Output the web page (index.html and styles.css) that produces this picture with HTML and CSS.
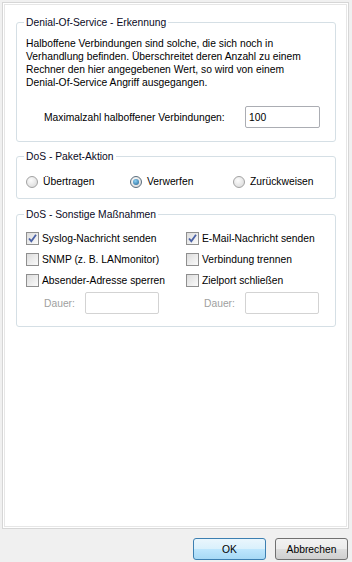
FILE: index.html
```html
<!DOCTYPE html>
<html lang="de">
<head>
    <meta charset="UTF-8">
    <title>DoS</title>
    <link rel="stylesheet" href="styles.css">
</head>
<body>
    <div class="panel">
        <fieldset class="group group-detect">
            <legend>Denial-Of-Service - Erkennung</legend>
            <p class="info">Halboffene Verbindungen sind solche, die sich noch in<br>Verhandlung befinden. Überschreitet deren Anzahl zu einem<br>Rechner den hier angegebenen Wert, so wird von einem<br>Denial-Of-Service Angriff ausgegangen.</p>
            <div class="max-row">
                <label for="maxhalf">Maximalzahl halboffener Verbindungen:</label>
                <input type="text" id="maxhalf" class="field" value="100">
            </div>
        </fieldset>

        <fieldset class="group group-action">
            <legend>DoS - Paket-Aktion</legend>
            <div class="radio-row">
                <span class="opt"><span class="radio"></span>Übertragen</span>
                <span class="opt"><span class="radio on"></span>Verwerfen</span>
                <span class="opt"><span class="radio"></span>Zurückweisen</span>
            </div>
        </fieldset>

        <fieldset class="group group-other">
            <legend>DoS - Sonstige Maßnahmen</legend>
            <div class="checks">
                <span class="opt"><span class="check"><svg viewBox="0 0 13 13" width="13" height="13"><path d="M3 6.5 L5.3 9.2 L10 2.8" fill="none" stroke="#4b62a6" stroke-width="1.8"/></svg></span>Syslog-Nachricht senden</span>
                <span class="opt"><span class="check"><svg viewBox="0 0 13 13" width="13" height="13"><path d="M3 6.5 L5.3 9.2 L10 2.8" fill="none" stroke="#4b62a6" stroke-width="1.8"/></svg></span>E-Mail-Nachricht senden</span>
                <span class="opt"><span class="check"></span>SNMP (z. B. LANmonitor)</span>
                <span class="opt"><span class="check"></span>Verbindung trennen</span>
                <span class="opt"><span class="check"></span>Absender-Adresse sperren</span>
                <span class="opt"><span class="check"></span>Zielport schließen</span>
                <span class="duration"><span class="dim">Dauer:</span><span class="field off"></span></span>
                <span class="duration"><span class="dim">Dauer:</span><span class="field off"></span></span>
            </div>
        </fieldset>
    </div>
    <div class="buttons">
        <button class="btn btn-default">OK</button>
        <button class="btn">Abbrechen</button>
    </div>
</body>
</html>
```

FILE: styles.css
```css
body {
    margin: 0;
    background: #f0f0f0;
    font-family: 'Liberation Sans', Arial, sans-serif;
    font-size: 10.3px;
    color: #000;
}
.panel {
    margin: 2px 3px 0 2px;
    height: 527px;
    box-sizing: border-box;
    background: #fff;
    border: 1px solid #d6d6d6;
    box-shadow: inset 0 0 0 1px #fff, inset 0 0 0 2px #e6e6e6;
    padding-top: 12px;
}
.group {
    width: 320px;
    box-sizing: border-box;
    margin: 0 0 0 13px;
    padding: 7px 9px 13px 9px;
    border: 1px solid #d5dfe5;
    border-radius: 3px;
}
.group legend {
    padding: 0 2px;
    margin-left: -2px;
    line-height: 15px;
    color: #0a0a1e;
}
.info {
    margin: 0;
    line-height: 13px;
    white-space: nowrap;
}
.max-row {
    display: flex;
    align-items: center;
    margin-top: 17px;
    padding-left: 18px;
}
.field {
    display: block;
    width: 75px;
    height: 22px;
    box-sizing: border-box;
    border: 1px solid #abadb3;
    border-radius: 2px;
    padding: 0 3px;
    font: inherit;
    color: #000;
    outline: none;
}
.max-row .field {
    margin-left: auto;
    margin-right: 6px;
}
.group-action {
    margin-top: 7px;
    padding-top: 10px;
    padding-bottom: 9px;
}
.radio-row {
    display: grid;
    grid-template-columns: 104px 103px 1fr;
    height: 15px;
}
.opt {
    display: flex;
    align-items: center;
    height: 21px;
    white-space: nowrap;
}
.radio-row .opt {
    height: 15px;
}
.radio {
    width: 12px;
    height: 12px;
    border-radius: 50%;
    border: 1px solid #a2a2a2;
    background: radial-gradient(circle at 40% 35%, #fcfcfc, #d6d6d6);
    box-sizing: border-box;
    margin-right: 5px;
    position: relative;
}
.radio.on {
    border-color: #5b6d7c;
}
.radio.on::after {
    content: "";
    position: absolute;
    left: 2px;
    top: 2px;
    width: 6px;
    height: 6px;
    border-radius: 50%;
    background: radial-gradient(circle at 40% 35%, #8ad0f4, #1f5f8f);
}
.group-other {
    margin-top: 8px;
    padding-top: 6px;
    padding-bottom: 12px;
}
.checks {
    display: grid;
    grid-template-columns: 160px 1fr;
}
.check {
    width: 13px;
    height: 13px;
    box-sizing: border-box;
    border: 1px solid #8f8f8f;
    background: linear-gradient(135deg, #dcdcdc, #fbfbfb);
    margin-right: 3px;
    position: relative;
}
.check svg {
    position: absolute;
    left: -1px;
    top: -1px;
}
.duration {
    display: flex;
    align-items: center;
    margin-top: 1px;
    padding-left: 18px;
}
.dim {
    color: #a0a0a0;
    width: 41px;
}
.field.off {
    width: 74px;
    border-color: #d3d3d3;
}
.buttons {
    display: flex;
    justify-content: flex-end;
    gap: 9px;
    padding: 9px 4px 0 0;
}
.btn {
    width: 73px;
    height: 22px;
    font: inherit;
    color: #000;
    border: 1px solid #707070;
    border-radius: 3px;
    background: linear-gradient(#f2f2f2 0%, #ebebeb 50%, #dddddd 51%, #cfcfcf 100%);
    padding: 0;
}
.btn-default {
    border-color: #3c7fb1;
    background: linear-gradient(#eaf6fd 0%, #d9f0fc 50%, #bee6fd 51%, #a7d9f5 100%);
}
```
